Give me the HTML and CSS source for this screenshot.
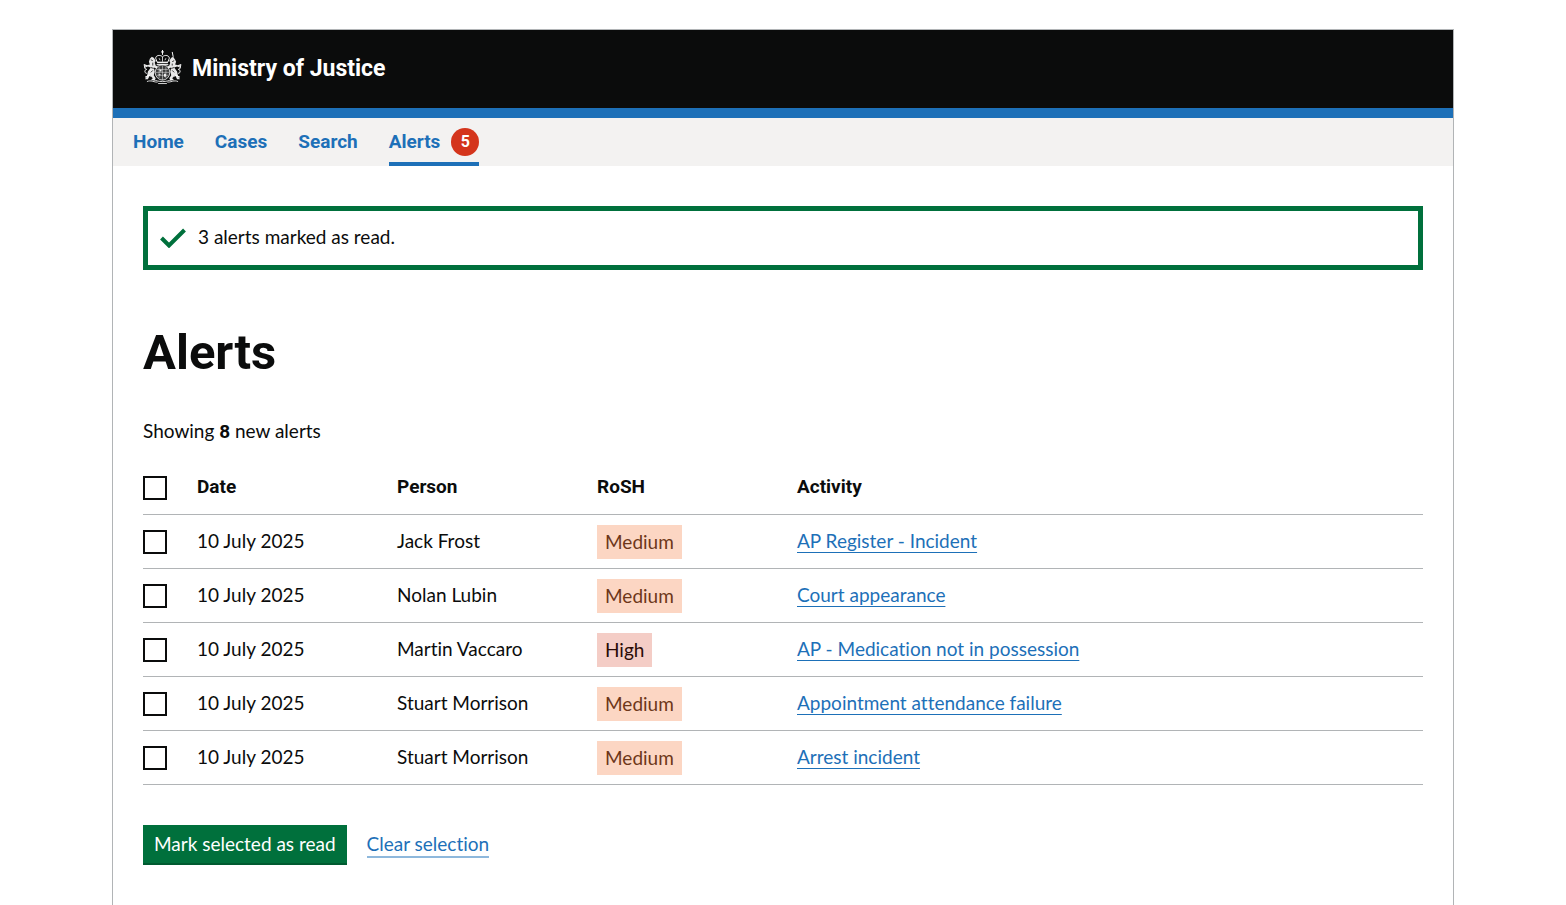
FILE: index.html
```html
<!DOCTYPE html>
<html lang="en">
<head>
<meta charset="utf-8">
<title>Alerts - Ministry of Justice</title>
<link rel="stylesheet" href="styles.css">
</head>
<body>
<div class="frame">
  <header class="header">
    <svg class="crest" viewBox="0 0 40 36" aria-hidden="true">
      <g fill="none" stroke="#fff" stroke-width="1">
        <path d="M20 0v5M18.500 2h3"/>
        <path d="M14.500 12.500l-1.500-4c0-3 4.500-4 7-1.500 2.500-2.500 7-1.500 7 1.500l-1.500 4z"/>
        <path d="M20 7v5M16.500 8.500l1 2M23.500 8.500l-1 2" stroke-opacity=".8"/>
        <path d="M14.500 13h11M14 15h12" stroke-width="1.200" stroke-opacity=".85"/>
        <ellipse cx="20" cy="23" rx="7.500" ry="8" fill="#fff" fill-opacity=".2" stroke-opacity=".8"/>
        <path d="M20 16v15M13 23h14M16.500 17v12M23.500 17v12M14 20h12M14 26h12" stroke-opacity=".45"/>
        <path d="M4 20c-3 0-3-4-1-4M2 18l-1-3 3 1M3 20c-2 2-1 4 1 4M2 28l4-2 2 1"/>
        <path d="M36 20c3 0 3-4 1-4M38 18l1-3-3 1M37 20c2 2 1 4-1 4M38 28l-4-2-2 1"/>
        <path d="M31 7l-1-5"/>
        <path d="M4 32.500c4-2 8 1 11 .5M36 32.500c-4-2-8 1-11 .5M15.500 34.500h9M10 30.500c4 1 6 2 10 2s6-1 10-2" stroke-opacity=".85"/>
      </g>
      <g fill="#fff" fill-opacity=".9">
        <path d="M7 9l2-2 2 1 2 3-1 2 1 3 2 1-1 2-3-1 1 4-1 4 2 3-1 2h-4l2-2-3-3-2 4H2l2-3 1-5 3-4-3-1-3 1 1-2 4-1-1-3z"/>
        <path d="M33 10l-2-3-2 1-2 3 1 2-1 3-2 1 1 2 3-1-1 4 1 4-2 3 1 2h4l-2-2 3-3 2 4h3l-2-3-1-5-3-4 3-1 3 1-1-2-4-1 1-3z"/>
        <path d="M17 20h2v2h-2zM21.500 24.500h2v3h-2zM16 25h2v1h-2z"/>
      </g>
      <path d="M8 10l2 1M10 13v3M8 23l2-2M32 11l-2 1M30 14v2M32 23l-2-2M8 18l3 1M32 18l-3 1" fill="none" stroke="#0b0c0c" stroke-width=".8"/>
    </svg>
    <a class="header-name" href="#">Ministry of Justice</a>
  </header>
  <nav class="nav" aria-label="Primary navigation">
    <a href="#">Home</a>
    <a href="#">Cases</a>
    <a href="#">Search</a>
    <a class="current" href="#" aria-current="page">Alerts <span class="count">5</span></a>
  </nav>
  <main class="main">
    <div class="banner" role="status">
      <svg class="tick" viewBox="0 0 26 20" aria-hidden="true"><path d="M1.500 10l7.500 7.500L24.500 2" fill="none" stroke="#00703c" stroke-width="4"/></svg>
      <p>3 alerts marked as read.</p>
    </div>
    <h1>Alerts</h1>
    <p class="summary">Showing <strong>8</strong> new alerts</p>
    <form>
      <table class="alerts">
        <thead>
          <tr><th class="pick"><input type="checkbox" aria-label="Select all alerts"></th><th class="col">Date</th><th class="col">Person</th><th class="col">RoSH</th><th>Activity</th></tr>
        </thead>
        <tbody>
          <tr><td><input type="checkbox" aria-label="Select AP Register - Incident"></td><td>10 July 2025</td><td>Jack Frost</td><td><span class="tag medium">Medium</span></td><td><a href="#">AP Register - Incident</a></td></tr>
          <tr><td><input type="checkbox" aria-label="Select Court appearance"></td><td>10 July 2025</td><td>Nolan Lubin</td><td><span class="tag medium">Medium</span></td><td><a href="#">Court appearance</a></td></tr>
          <tr><td><input type="checkbox" aria-label="Select AP - Medication not in possession"></td><td>10 July 2025</td><td>Martin Vaccaro</td><td><span class="tag high">High</span></td><td><a href="#">AP - Medication not in possession</a></td></tr>
          <tr><td><input type="checkbox" aria-label="Select Appointment attendance failure"></td><td>10 July 2025</td><td>Stuart Morrison</td><td><span class="tag medium">Medium</span></td><td><a href="#">Appointment attendance failure</a></td></tr>
          <tr><td><input type="checkbox" aria-label="Select Arrest incident"></td><td>10 July 2025</td><td>Stuart Morrison</td><td><span class="tag medium">Medium</span></td><td><a href="#">Arrest incident</a></td></tr>
        </tbody>
      </table>
      <div class="actions">
        <button type="submit">Mark selected as read</button>
        <a href="#">Clear selection</a>
      </div>
    </form>
  </main>
</div>
</body>
</html>
```
FILE: styles.css
```css
* { box-sizing: border-box; }
html, body { min-height: 100%; }
html { height: 100%; }
body {
  margin: 0;
  height: 100%;
  padding: 29px 112px 0;
  display: flex;
  background: #fff;
  color: #0b0c0c;
  font: 19px/24px Lato, "Liberation Sans", sans-serif;
  font-variant-ligatures: none;
}
p, h1 { margin: 0; }
a { color: #1d70b8; }
h1, th, strong, .header-name, .nav {
  font-family: Roboto, "Liberation Sans", sans-serif;
}
.frame {
  flex: 1;
  border: 1px solid #b1b4b6;
  border-bottom: 0;
}
.header {
  display: flex;
  align-items: center;
  gap: 10px;
  height: 88px;
  padding: 0 30px;
  background: #0b0c0c;
  border-bottom: 10px solid #1d70b8;
}
.crest { width: 39px; height: 35px; margin-bottom: 3px; }
.header-name {
  color: #fff;
  font-size: 23px;
  font-weight: 700;
  line-height: 30px;
  text-decoration: none;
}
.nav {
  display: flex;
  gap: 31px;
  height: 48px;
  padding: 0 20px;
  background: #f3f2f1;
}
.nav a {
  display: flex;
  align-items: center;
  font-weight: 700;
  text-decoration: none;
}
.nav .current {
  gap: 11px;
  border-top: 4px solid transparent;
  border-bottom: 4px solid #1d70b8;
}
.count {
  width: 28px;
  height: 28px;
  border-radius: 50%;
  background: #d4351c;
  color: #fff;
  font-size: 16px;
  line-height: 28px;
  text-align: center;
}
.main { padding: 40px 30px; }
.banner {
  display: flex;
  align-items: center;
  gap: 12px;
  height: 64px;
  padding: 0 12px;
  border: 5px solid #00703c;
}
.banner p { padding-bottom: 2px; }
.tick { width: 26px; height: 20px; }
h1 {
  margin: 58px 0 41px;
  font-size: 49px;
  font-weight: 700;
  line-height: 50px;
}
.summary { margin-bottom: 16px; }
.alerts {
  width: 100%;
  border-collapse: collapse;
  table-layout: fixed;
  margin-bottom: 40px;
}
.alerts th, .alerts td {
  height: 54px;
  padding: 0;
  border-bottom: 1px solid #b1b4b6;
  text-align: left;
  vertical-align: middle;
}
.pick { width: 54px; }
.col { width: 200px; }
.alerts input {
  display: block;
  appearance: none;
  width: 24px;
  height: 24px;
  margin: 2px 0 0;
  border: 2px solid #0b0c0c;
  background: #fff;
}
.alerts a {
  text-decoration-thickness: 1px;
  text-underline-offset: 4px;
  text-decoration-skip-ink: none;
}
.tag {
  display: inline-block;
  margin-top: 2px;
  padding: 5px 8px;
}
.medium { background: #fcd6c3; color: #6e3619; }
.high { background: #f4cdc6; color: #2a0b06; }
.actions {
  display: flex;
  align-items: center;
  gap: 20px;
}
.actions button {
  padding: 7px 11px;
  border: 0;
  border-bottom: 2px solid #005a30;
  background: #00703c;
  color: #fff;
  font: inherit;
  font-variant-ligatures: none;
}
.actions a {
  border-bottom: 2px solid #8eb8dc;
  text-decoration: none;
}
```
